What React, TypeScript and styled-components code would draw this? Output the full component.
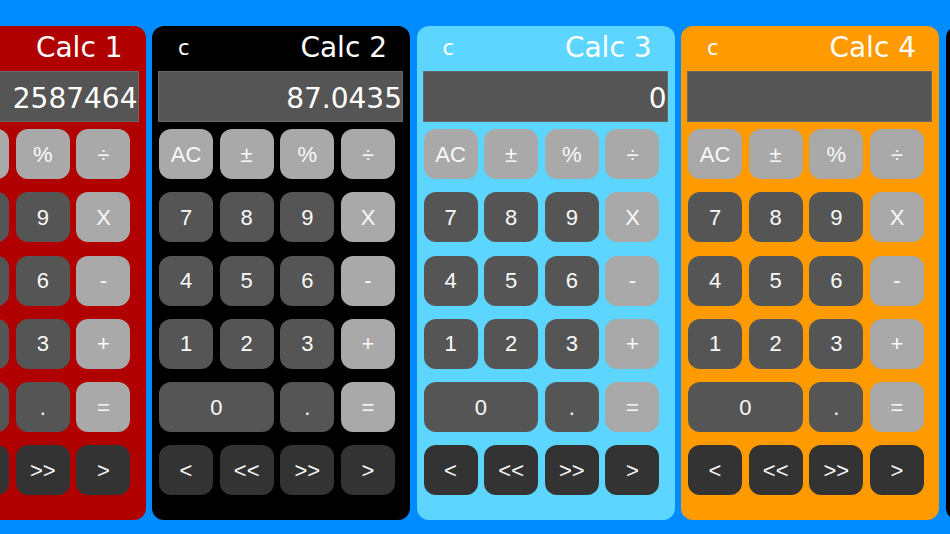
import React from "react";
import styled, { createGlobalStyle } from "styled-components";

const Global = createGlobalStyle`
  html, body {
    margin: 0;
    padding: 0;
    width: 950px;
    height: 534px;
    overflow: hidden;
    background: #008cff;
  }
  #root { width: 950px; height: 534px; overflow: hidden; }
`;

const Strip = styled.div`
  display: flex;
  gap: 6.5px;
  margin-left: -112.5px;
  padding-top: 26px;
  width: max-content;
`;

const Card = styled.div<{ $bg: string }>`
  box-sizing: border-box;
  width: 258px;
  height: 494px;
  flex: none;
  border-radius: 12px;
  background: ${(p) => p.$bg};
  padding: 0 7px 0 6px;
  display: flex;
  flex-direction: column;
`;

const TitleRow = styled.div`
  height: 45px;
  display: flex;
  align-items: center;
  justify-content: space-between;
  padding: 0 16px 0 20px;
  color: #fff;
  font-family: "DejaVu Sans", sans-serif;
`;

const Clear = styled.span`
  font-size: 21px;
  line-height: 1;
  margin-top: 0px;
`;

const Title = styled.span`
  font-size: 28px;
  line-height: 1;
  margin-top: -2px;
`;

const Display = styled.div`
  box-sizing: border-box;
  height: 51px;
  background: #555555;
  border: 1px solid #676767;
  color: #fff;
  font-family: "DejaVu Sans", sans-serif;
  font-size: 28px;
  display: flex;
  align-items: center;
  justify-content: flex-end;
  padding: 3px 0 0 0;
  overflow: hidden;
  white-space: nowrap;
`;

const Keys = styled.div`
  display: grid;
  grid-template-columns: repeat(4, 54px);
  grid-auto-rows: 50px;
  column-gap: 6.67px;
  row-gap: 13.3px;
  margin-top: 7px;
  padding-left: 1px;
`;

const Key = styled.div<{ $bg: string; $span?: number }>`
  grid-column: span ${(p) => p.$span ?? 1};
  background: ${(p) => p.$bg};
  border-radius: 12px;
  color: #fafafa;
  font-family: "Liberation Sans", Arial, sans-serif;
  font-size: 22px;
  display: flex;
  align-items: center;
  justify-content: center;
  padding-top: 1px;
`;

const LIGHT = "#a9a9a9";
const DARK = "#555555";
const NAV = "#333333";

type K = { l: string; c: string; s?: number };

const keys: K[] = [
  { l: "AC", c: LIGHT },
  { l: "±", c: LIGHT },
  { l: "%", c: LIGHT },
  { l: "÷", c: LIGHT },
  { l: "7", c: DARK },
  { l: "8", c: DARK },
  { l: "9", c: DARK },
  { l: "X", c: LIGHT },
  { l: "4", c: DARK },
  { l: "5", c: DARK },
  { l: "6", c: DARK },
  { l: "-", c: LIGHT },
  { l: "1", c: DARK },
  { l: "2", c: DARK },
  { l: "3", c: DARK },
  { l: "+", c: LIGHT },
  { l: "0", c: DARK, s: 2 },
  { l: ".", c: DARK },
  { l: "=", c: LIGHT },
  { l: "<", c: NAV },
  { l: "<<", c: NAV },
  { l: ">>", c: NAV },
  { l: ">", c: NAV },
];

const calcs = [
  { name: "Calc 1", bg: "#b00000", value: "2587464" },
  { name: "Calc 2", bg: "#000000", value: "87.0435" },
  { name: "Calc 3", bg: "#5cd6ff", value: "0" },
  { name: "Calc 4", bg: "#ff9a00", value: "" },
  { name: "Calc 5", bg: "#000000", value: "" },
];

function Calculator({ name, bg, value }: { name: string; bg: string; value: string }) {
  return (
    <Card $bg={bg}>
      <TitleRow>
        <Clear>c</Clear>
        <Title>{name}</Title>
      </TitleRow>
      <Display>{value}</Display>
      <Keys>
        {keys.map((k, i) => (
          <Key key={i} $bg={k.c} $span={k.s}>
            {k.l}
          </Key>
        ))}
      </Keys>
    </Card>
  );
}

export default function App() {
  return (
    <>
      <Global />
      <Strip>
        {calcs.map((c) => (
          <Calculator key={c.name} {...c} />
        ))}
      </Strip>
    </>
  );
}
